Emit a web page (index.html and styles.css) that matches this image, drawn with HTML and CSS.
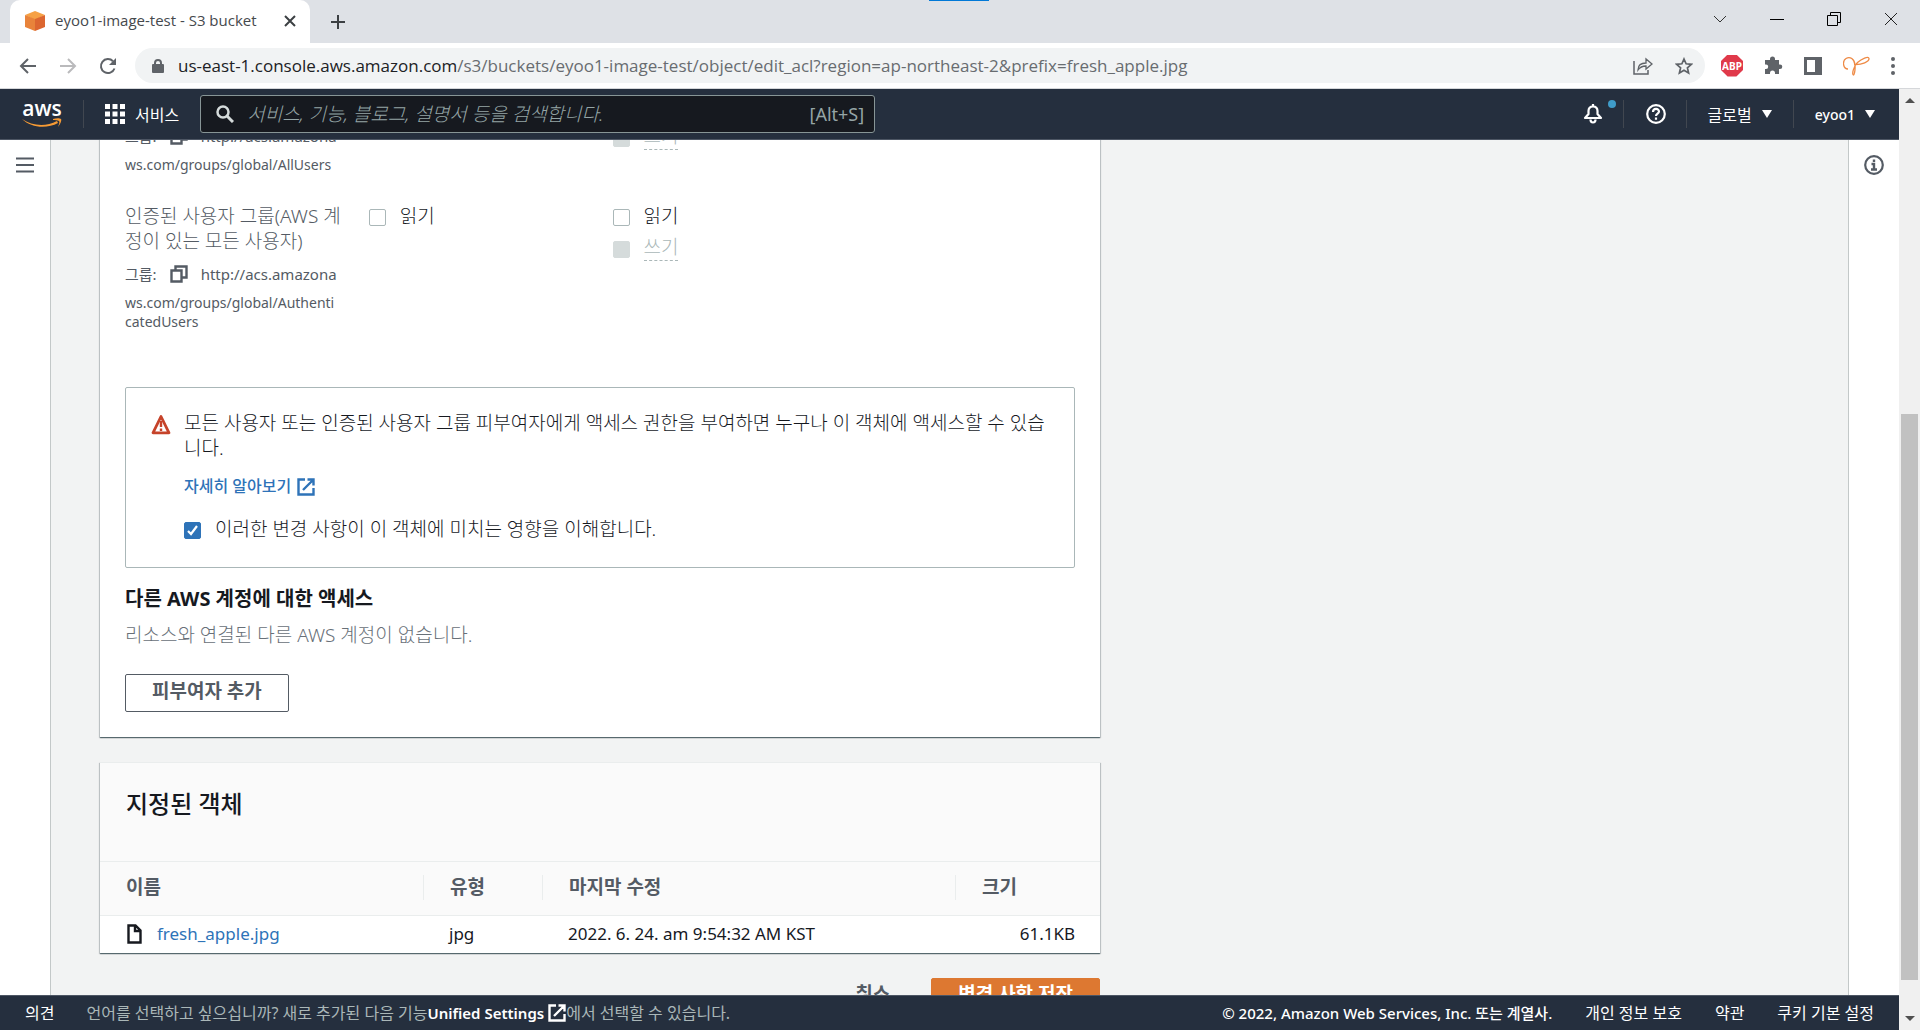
FILE: index.html
```html
<!DOCTYPE html>
<html lang="ko">
<head>
    <meta charset="UTF-8">
    <meta name="viewport" content="width=device-width, initial-scale=1.0">
    <title>eyoo1-image-test - S3 bucket</title>
    <link rel="stylesheet" href="styles.css">
</head>
<body>

<!-- 브라우저 탭 -->
<div class="tab-strip">
    <div class="tab">
        <svg class="favicon" width="20" height="20" viewBox="0 0 20 20">
            <path fill="#f6a145" d="M10 0l10 4-10 5L0 4z"/>
            <path fill="#e8833a" d="M0 4l10 4v12L0 16z"/>
            <path fill="#dc6630" d="M20 4L10 8v12l10-4z"/>
        </svg>
        <span class="tab-title">eyoo1-image-test - S3 bucket</span>
        <button class="icon-btn" aria-label="탭 닫기">
            <svg width="12" height="12" viewBox="0 0 12 12"><path d="M1 1l10 10M11 1L1 11" stroke="#3c4043" stroke-width="2"/></svg>
        </button>
    </div>
    <button class="icon-btn new-tab" aria-label="새 탭">
        <svg width="16" height="16" viewBox="0 0 16 16"><path d="M8 1v14M1 8h14" stroke="#3c4043" stroke-width="2"/></svg>
    </button>
    <div class="drag-handle"><span></span></div>
    <div class="window-buttons">
        <button class="icon-btn" aria-label="탭 검색"><svg width="14" height="14" viewBox="0 0 14 14"><path d="M1 4l6 6 6-6" fill="none" stroke="#333"/></svg></button>
        <button class="icon-btn" aria-label="최소화"><svg width="14" height="14" viewBox="0 0 14 14"><path d="M0 7.500h14" stroke="#000"/></svg></button>
        <button class="icon-btn" aria-label="창 크기"><svg width="14" height="14" viewBox="0 0 14 14"><path d="M.5 3.500h10v10h-10zM3.500 3V.5h10v10H11" fill="none" stroke="#000"/></svg></button>
        <button class="icon-btn" aria-label="닫기"><svg width="14" height="14" viewBox="0 0 14 14"><path d="M1 1l12 12M13 1L1 13" stroke="#222"/></svg></button>
    </div>
</div>

<!-- 주소 표시줄 -->
<div class="toolbar">
    <button class="icon-btn" aria-label="뒤로"><svg width="18" height="18" viewBox="0 0 18 18"><path d="M17 9H2M9 2L2 9l7 7" fill="none" stroke="#5f6368" stroke-width="2"/></svg></button>
    <button class="icon-btn" aria-label="앞으로"><svg width="18" height="18" viewBox="0 0 18 18"><path d="M1 9h15M9 2l7 7-7 7" fill="none" stroke="#bababc" stroke-width="2"/></svg></button>
    <button class="icon-btn" aria-label="새로고침"><svg width="18" height="18" viewBox="0 0 18 18"><path d="M15.500 11.500A7 7 0 1 1 14 4.200" fill="none" stroke="#5f6368" stroke-width="2"/><path d="M17 1v7h-7z" fill="#5f6368"/></svg></button>
    <div class="address">
        <svg width="12" height="14" viewBox="0 0 12 14"><rect y="5" width="12" height="9" rx="1" fill="#5f6368"/><path d="M3 6V4a3 3 0 0 1 6 0v2" fill="none" stroke="#5f6368" stroke-width="2"/></svg>
        <span class="url"><span class="host">us-east-1.console.aws.amazon.com</span>/s3/buckets/eyoo1-image-test/object/edit_acl?region=ap-northeast-2&amp;prefix=fresh_apple.jpg</span>
        <button class="icon-btn" aria-label="공유"><svg width="20" height="18" viewBox="0 0 20 18"><path d="M1 4v13h14v-4" fill="none" stroke="#5f6368" stroke-width="1.500"/><path d="M5 13c0-5 3-7 8-7V2l6 5-6 5V9c-4 0-6 1-8 4z" fill="none" stroke="#5f6368" stroke-width="1.300"/></svg></button>
        <button class="icon-btn" aria-label="북마크"><svg width="18" height="18" viewBox="0 0 18 18"><path d="M9 2l2.100 4.800 5.300.5-4 3.500 1.200 5.200L9 13.200 4.400 16l1.200-5.200-4-3.500 5.300-.5z" fill="none" stroke="#5f6368" stroke-width="1.700"/></svg></button>
    </div>
    <div class="extensions">
        <span class="abp">ABP</span>
        <svg width="19" height="19" viewBox="0 0 19 19"><path fill="#5f6368" d="M2 4h4V3a2.500 2.500 0 0 1 5 0v1h4v4.500h1a2.300 2.300 0 0 1 0 4.600h-1V18h-4v-1a2.200 2.200 0 0 0-5 0v1H1v-5h1a2.200 2.200 0 0 0 0-4.400H1V4z"/></svg>
        <svg width="18" height="18" viewBox="0 0 18 18"><path fill="#5f6368" fill-rule="evenodd" d="M0 0h18v18H0zM3 3v12h8V3z"/></svg>
        <svg width="27" height="20" viewBox="0 0 27 20"><path d="M5 13C0 13-1 5 3 2.500s8.500.5 9 6.500-1 10-1.500 10c-2 0 0-9 4-12.500s11-7 11.500-4-7 6.500-15 6" fill="none" stroke="#ee8a45" stroke-width="1.300"/></svg>
        <svg width="4" height="18" viewBox="0 0 4 18" fill="#5f6368"><circle cx="2" cy="2" r="2"/><circle cx="2" cy="9" r="2"/><circle cx="2" cy="16" r="2"/></svg>
    </div>
</div>

<div class="viewport">
    <div class="console">

        <!-- 상단 메뉴 -->
        <header class="nav">
            <a class="logo" href="#" aria-label="AWS">
                <span>aws</span>
                <svg width="40" height="10" viewBox="0 0 40 10"><path d="M0 1c10 7 24 8 35 2l1 2C25 11 9 10 0 1z" fill="#f79b34"/><path d="M31 1c3-1 7-1 8 0s-1 6-3 8c1-3 2-5 1-6s-4-1-6-1z" fill="#f79b34"/></svg>
            </a>
            <i class="divider"></i>
            <button class="nav-btn services">
                <svg width="20" height="20" viewBox="0 0 20 20" fill="#fff"><path d="M0 0h5v5H0zM7.500 0h5v5h-5zM15 0h5v5h-5zM0 7.500h5v5H0zM7.500 7.500h5v5h-5zM15 7.500h5v5h-5zM0 15h5v5H0zM7.500 15h5v5h-5zM15 15h5v5h-5z"/></svg>
                서비스
            </button>
            <label class="search">
                <svg width="18" height="18" viewBox="0 0 18 18"><circle cx="7" cy="7" r="5.500" fill="none" stroke="#d5dbdb" stroke-width="2.500"/><path d="M11 11l6 6" stroke="#d5dbdb" stroke-width="3"/></svg>
                <input type="text" aria-label="검색" placeholder="서비스, 기능, 블로그, 설명서 등을 검색합니다.">
                <span>[Alt+S]</span>
            </label>
            <div class="nav-right">
                <button class="nav-btn bell" aria-label="알림">
                    <svg width="20" height="20" viewBox="0 0 20 20"><path d="M10 2.500c-3 0-4.500 2-4.500 4.500v3L2 14h16l-3.500-4V7c0-2.500-1.500-4.500-4.500-4.500z" fill="none" stroke="#fff" stroke-width="2.200" stroke-linejoin="round"/><path d="M10 0v3M7.500 15.500a2.500 3 0 0 0 5 0" fill="none" stroke="#fff" stroke-width="2.200"/></svg>
                    <span class="dot"></span>
                </button>
                <i class="divider"></i>
                <button class="nav-btn help" aria-label="도움말">
                    <svg width="20" height="20" viewBox="0 0 20 20" fill="none" stroke="#fff" stroke-width="2.200"><circle cx="10" cy="10" r="8.800"/><path d="M7 8c0-4 6-4 6-.5 0 2.200-3 2-3 4.500M10 13.500v2.200"/></svg>
                </button>
                <i class="divider"></i>
                <button class="nav-btn region">글로벌 <i class="caret"></i></button>
                <i class="divider"></i>
                <button class="nav-btn account">eyoo1 <i class="caret"></i></button>
            </div>
        </header>

        <div class="body">
            <aside class="side left">
                <button class="icon-btn" aria-label="메뉴 열기"><svg width="18" height="16" viewBox="0 0 18 16"><path d="M0 1.500h18M0 8h18M0 14.500h18" stroke="#545b64" stroke-width="2.200"/></svg></button>
            </aside>

            <main class="main">
                <div class="content">
                    <section class="card acl">
                        <div class="acl-row partial">
                            <div>
                                <p class="group">그룹:
                                    <svg width="18" height="18" viewBox="0 0 18 18"><path d="M1.500 5.500h10v11h-10zM5.500 5V1.500h11v11H12" fill="none" stroke="#545b64" stroke-width="2.400"/></svg>
                                    <span>http://acs.amazona</span></p>
                                <p class="uri">ws.com/groups/global/AllUsers</p>
                            </div>
                            <div></div>
                            <div class="checks">
                                <label class="check disabled"><input type="checkbox" disabled><span>쓰기</span></label>
                            </div>
                        </div>
                        <div class="acl-row">
                            <div>
                                <p class="grantee">인증된 사용자 그룹(AWS 계정이 있는 모든 사용자)</p>
                                <p class="group">그룹:
                                    <svg width="18" height="18" viewBox="0 0 18 18"><path d="M1.500 5.500h10v11h-10zM5.500 5V1.500h11v11H12" fill="none" stroke="#545b64" stroke-width="2.400"/></svg>
                                    <span>http://acs.amazona</span></p>
                                <p class="uri">ws.com/groups/global/AuthenticatedUsers</p>
                            </div>
                            <div class="checks">
                                <label class="check"><input type="checkbox"><span>읽기</span></label>
                            </div>
                            <div class="checks">
                                <label class="check"><input type="checkbox"><span>읽기</span></label>
                                <label class="check disabled"><input type="checkbox" disabled><span>쓰기</span></label>
                            </div>
                        </div>

                        <div class="alert">
                            <svg width="20" height="22" viewBox="0 0 20 22"><path d="M10 3.500L18 19.800H2z" fill="none" stroke="#c6432a" stroke-width="2.800" stroke-linejoin="round"/><path d="M10 8v6M10 15.500v2.500" stroke="#c6432a" stroke-width="2.400"/></svg>
                            <div>
                                <p>모든 사용자 또는 인증된 사용자 그룹 피부여자에게 액세스 권한을 부여하면 누구나 이 객체에 액세스할 수 있습니다.</p>
                                <a class="learn-more" href="#">자세히 알아보기
                                    <svg width="18" height="18" viewBox="0 0 18 18" fill="none" stroke="#2e73b8" stroke-width="2.400"><path d="M8 1.500H1.500v15h15V10M10.500 1.500h6v6M16 2L6 12"/></svg>
                                </a>
                                <label class="check"><input type="checkbox" checked><span>이러한 변경 사항이 이 객체에 미치는 영향을 이해합니다.</span></label>
                            </div>
                        </div>

                        <h3>다른 AWS 계정에 대한 액세스</h3>
                        <p class="empty">리소스와 연결된 다른 AWS 계정이 없습니다.</p>
                        <button class="btn">피부여자 추가</button>
                    </section>

                    <section class="card">
                        <h2>지정된 객체</h2>
                        <table>
                            <thead>
                                <tr>
                                    <th class="col-name"><span>이름</span></th>
                                    <th class="col-type"><span>유형</span></th>
                                    <th class="col-date"><span>마지막 수정</span></th>
                                    <th><span>크기</span></th>
                                </tr>
                            </thead>
                            <tbody>
                                <tr>
                                    <td>
                                        <a class="file" href="#">
                                            <svg width="18" height="20" viewBox="0 0 18 20"><path d="M3.500 1.500h7l5 5v12h-12zM10 1.500V7h5.500" fill="none" stroke="#16191f" stroke-width="2.400"/></svg>
                                            fresh_apple.jpg
                                        </a>
                                    </td>
                                    <td>jpg</td>
                                    <td>2022. 6. 24. am 9:54:32 AM KST</td>
                                    <td class="size">61.1KB</td>
                                </tr>
                            </tbody>
                        </table>
                    </section>

                    <div class="actions">
                        <button class="btn link">취소</button>
                        <button class="btn primary">변경 사항 저장</button>
                    </div>
                </div>
            </main>

            <aside class="side right">
                <button class="icon-btn" aria-label="정보"><svg width="20" height="20" viewBox="0 0 20 20"><circle cx="10" cy="10" r="8.800" fill="none" stroke="#545b64" stroke-width="2.200"/><path d="M10 4.500v2.500M7.500 9H10v5M7 14.500h6" fill="none" stroke="#545b64" stroke-width="2.400"/></svg></button>
            </aside>
        </div>

        <footer class="footer">
            <a href="#">의견</a>
            <p>언어를 선택하고 싶으십니까? 새로 추가된 다음 기능<a href="#">Unified Settings
                <svg width="18" height="18" viewBox="0 0 18 18" fill="none" stroke="#fff" stroke-width="2.400"><path d="M8 1.500H1.500v15h15V10M10.500 1.500h6v6M16 2L6 12"/></svg></a>에서 선택할 수 있습니다.</p>
            <div class="legal">
                <span class="copyright">© 2022, Amazon Web Services, Inc. 또는 계열사.</span>
                <a href="#">개인 정보 보호</a>
                <a href="#">약관</a>
                <a href="#">쿠키 기본 설정</a>
            </div>
        </footer>
    </div>

    <!-- 스크롤바 -->
    <div class="scrollbar">
        <i class="arrow up"></i>
        <div class="track"><div class="thumb"></div></div>
        <i class="arrow down"></i>
    </div>
</div>

</body>
</html>
```
FILE: styles.css
```css
* {
    box-sizing: border-box;
}
body {
    font-family: "Noto Sans", "Noto Sans CJK KR", sans-serif;
    font-size: 17px;
    line-height: 25px;
    color: #16191f;
    margin: 0;
    height: 100vh;
    display: flex;
    flex-direction: column;
    overflow: hidden;
}
p, h2, h3 {
    margin: 0;
}
a {
    text-decoration: none;
}
button, input {
    font-family: inherit;
}
svg {
    flex: none;
    display: block;
}
.icon-btn {
    display: flex;
    align-items: center;
    justify-content: center;
    background: none;
    border: none;
    padding: 0;
}

/* 브라우저 */
.tab-strip {
    display: flex;
    height: 43px;
    flex: none;
    background-color: #dee1e6;
    padding-left: 10px;
}
.tab {
    display: flex;
    align-items: center;
    width: 300px;
    background-color: #fff;
    border-radius: 10px 10px 0 0;
    padding: 0 14px 2px 15px;
}
.tab-title {
    font-family: "Open Sans", sans-serif;
    font-size: 15px;
    color: #45494d;
    flex: 1;
    margin-left: 10px;
}
.new-tab {
    margin-left: 20px;
}
.drag-handle {
    flex: 1;
    display: flex;
    justify-content: center;
    align-items: flex-start;
    padding-right: 142px;
}
.drag-handle span {
    width: 60px;
    height: 1px;
    background-color: #0078d7;
}
.window-buttons {
    display: flex;
    align-items: center;
    gap: 43px;
    padding: 0 22px 6px 0;
}
.toolbar {
    display: flex;
    align-items: center;
    height: 46px;
    flex: none;
    gap: 22px;
    padding: 0 25px 0 19px;
    background-color: #fff;
    border-bottom: 1px solid #d5d7da;
}
.address {
    flex: 1;
    display: flex;
    align-items: center;
    gap: 22px;
    height: 35px;
    border-radius: 18px;
    background-color: #f1f3f4;
    padding: 0 12px 0 17px;
    margin-left: -4px;
}
.url {
    flex: 1;
    font-family: "Open Sans", sans-serif;
    font-size: 17px;
    color: #686c70;
    margin-left: -8px;
    white-space: nowrap;
}
.host {
    color: #202124;
}
.extensions {
    display: flex;
    align-items: center;
    gap: 21px;
    margin-left: -6px;
}
.abp {
    width: 22px;
    height: 22px;
    line-height: 22px;
    background-color: #e0394a;
    color: #fff;
    font-size: 10px;
    font-weight: bold;
    text-align: center;
    clip-path: polygon(30% 0, 70% 0, 100% 30%, 100% 70%, 70% 100%, 30% 100%, 0 70%, 0 30%);
}

/* 콘솔 */
.viewport {
    flex: 1;
    min-height: 0;
    display: flex;
}
.console {
    flex: 1;
    min-width: 0;
    display: flex;
    flex-direction: column;
}
.nav {
    display: flex;
    align-items: center;
    height: 51px;
    flex: none;
    background-color: #252f3e;
    border-bottom: 1px solid #4d5664;
    padding-left: 22px;
}
.logo {
    color: #fff;
    font-family: "Open Sans", sans-serif;
    font-size: 21px;
    font-weight: 600;
    line-height: 16px;
    width: 40px;
    text-align: center;
}
.logo span {
    display: block;
    padding-bottom: 2px;
}
.divider {
    width: 1px;
    height: 28px;
    background-color: #414750;
}
.logo + .divider {
    margin-left: 21px;
}
.nav-btn {
    display: flex;
    align-items: center;
    gap: 10px;
    background: none;
    border: none;
    color: #fff;
    font-size: 16px;
    padding: 0 21px;
}
.search {
    display: flex;
    align-items: center;
    width: 675px;
    height: 38px;
    background-color: #16191f;
    border: 1px solid #879596;
    border-radius: 3px;
    padding: 0 10px 0 15px;
    font-size: 18px;
    color: #95a5a6;
}
.search input {
    flex: 1;
    background: none;
    border: none;
    outline: none;
    color: #fff;
    font-size: 19px;
    font-weight: 300;
    padding: 0 0 0 13px;
}
.search input::placeholder {
    color: #95a5a6;
    font-style: italic;
    opacity: 1;
}
.nav-right {
    display: flex;
    align-items: center;
    margin-left: auto;
}
.bell {
    position: relative;
    padding: 0 20px;
}
.dot {
    position: absolute;
    top: -4px;
    right: 7px;
    width: 8px;
    height: 8px;
    border-radius: 50%;
    background-color: #3f9cc9;
}
.help {
    padding: 0 20px 0 22px;
}
.account {
    padding-right: 24px;
    font-size: 14px;
    font-weight: 500;
}
.caret {
    border: 5px solid transparent;
    border-top: 8px solid #fff;
    border-bottom: 0;
}
.body {
    flex: 1;
    min-height: 0;
    display: flex;
}
.side {
    width: 51px;
    flex: none;
    background-color: #fff;
    padding-top: 15px;
}
.side .icon-btn {
    width: 100%;
    height: 20px;
}
.left {
    border-right: 1px solid #c3c8c8;
}
.right {
    border-left: 1px solid #c3c8c8;
}
.main {
    flex: 1;
    min-width: 0;
    overflow: hidden;
    background-color: #f2f3f3;
    padding: 0 49px;
}
/* 스크롤된 상태 */
.content {
    max-width: 1000px;
    margin-top: -18px;
}
.card {
    background-color: #fff;
    border-top: 1px solid #eaeded;
    box-shadow: 0 1px 1px 0 rgba(0, 28, 36, 0.5), 1px 1px 1px 0 rgba(0, 28, 36, 0.15), -1px 1px 1px 0 rgba(0, 28, 36, 0.15);
    margin-bottom: 25px;
}
.acl {
    border-top: none;
    padding: 0 25px 25px;
}
.acl-row {
    display: grid;
    grid-template-columns: repeat(4, 1fr);
    gap: 25px;
    margin-bottom: 56px;
    color: #545b64;
}
.acl-row.partial {
    margin-bottom: 30px;
}
.grantee {
    font-size: 19px;
    font-weight: 300;
    margin-bottom: 6px;
}
.group {
    display: flex;
    align-items: center;
    gap: 13px;
    height: 28px;
    font-size: 15px;
    margin-bottom: 5px;
}
.uri {
    font-size: 14px;
    line-height: 19px;
    padding-right: 6px;
    word-break: break-all;
}
.checks {
    display: flex;
    flex-direction: column;
    align-items: flex-start;
    gap: 6px;
}
.partial .checks {
    padding-top: 2px;
}
.check {
    display: flex;
    align-items: center;
    gap: 14px;
    font-size: 19px;
    font-weight: 300;
    color: #16191f;
}
.check input {
    appearance: none;
    width: 17px;
    height: 17px;
    margin: 2px 0 0;
    border: 1px solid #aab7b8;
    border-radius: 2px;
    background-color: #fff;
}
.check input:checked {
    border-color: #2e73b8;
    background: #2e73b8 url("data:image/svg+xml,%3Csvg xmlns='http://www.w3.org/2000/svg' viewBox='0 0 15 15'%3E%3Cpath d='M3 8l3 3 6-8' fill='none' stroke='white' stroke-width='2.200'/%3E%3C/svg%3E");
}
.check input:disabled {
    background-color: #d5dbdb;
    border-color: #d5dbdb;
}
.disabled span {
    color: #aab7b8;
    border-bottom: 1px dashed #aab7b8;
}
.alert {
    display: flex;
    gap: 13px;
    border: 1px solid #aab7b8;
    border-radius: 2px;
    padding: 23px 25px 25px;
    font-size: 19px;
    font-weight: 300;
}
.alert > svg {
    margin-top: 2px;
}
.learn-more {
    display: flex;
    align-items: center;
    gap: 6px;
    font-size: 16px;
    font-weight: 500;
    color: #2e73b8;
    margin: 13px 0 18px;
}
h3 {
    font-size: 20px;
    font-weight: bold;
    margin-top: 18px;
}
.empty {
    color: #687078;
    font-size: 19px;
    font-weight: 300;
    margin: 12px 0 26px;
}
.btn {
    height: 38px;
    background-color: #fff;
    color: #545b64;
    border: 1px solid #545b64;
    border-radius: 2px;
    font-size: 19px;
    font-weight: bold;
    line-height: 25px;
    padding: 0 26px 4px;
}
h2 {
    background-color: #fafafa;
    font-size: 24px;
    font-weight: 500;
    line-height: 30px;
    padding: 26px 26px 42px;
}
table {
    width: 100%;
    table-layout: fixed;
    border-collapse: collapse;
}
th {
    height: 54px;
    text-align: left;
    background-color: #fafafa;
    border-top: 1px solid #eaeded;
    border-bottom: 1px solid #eaeded;
    color: #545b64;
    font-size: 19px;
    padding: 0 0 2px;
}
th span {
    display: block;
    padding-left: 26px;
    border-right: 1px solid #eaeded;
}
th:last-child span {
    border-right: none;
}
td {
    height: 37px;
    padding: 0 25px 1px;
}
.col-name {
    width: 32.4%;
}
.col-type {
    width: 11.9%;
}
.col-date {
    width: 41.3%;
}
.size {
    text-align: right;
}
.file {
    display: flex;
    align-items: center;
    gap: 14px;
    color: #2e73b8;
}
.actions {
    display: flex;
    justify-content: flex-end;
}
.btn.link {
    background: none;
    border-color: transparent;
    padding: 0 40px 4px;
}
.btn.primary {
    background-color: #dd7831;
    border-color: #dd7831;
    color: #fff;
}
.footer {
    display: flex;
    align-items: center;
    height: 35px;
    flex: none;
    background-color: #252f3e;
    border-top: 1px solid #4d5664;
    padding: 0 25px;
    gap: 32px;
    font-size: 16px;
    white-space: nowrap;
    color: #aab7b8;
}
.footer a {
    color: #fff;
}
.footer p {
    display: flex;
    align-items: center;
}
.footer p a {
    display: flex;
    align-items: center;
    gap: 4px;
    font-size: 15px;
    font-weight: 600;
}
.legal {
    display: flex;
    gap: 33px;
    margin-left: auto;
}
.copyright {
    color: #fff;
    font-size: 15px;
    font-weight: 500;
}
.scrollbar {
    width: 21px;
    display: flex;
    flex-direction: column;
    align-items: center;
    justify-content: space-between;
    background-color: #f0f0f0;
    padding: 9px 0;
}
.track {
    flex: 1;
    width: 17px;
    display: flex;
    flex-direction: column;
    justify-content: flex-end;
}
.thumb {
    height: 62%;
    margin-bottom: 36px;
    background-color: #c1c1c1;
}
.arrow {
    border: 5px solid transparent;
}
.up {
    border-bottom-color: #505050;
    border-top: 0;
}
.down {
    border-top-color: #505050;
    border-bottom: 0;
}
```
